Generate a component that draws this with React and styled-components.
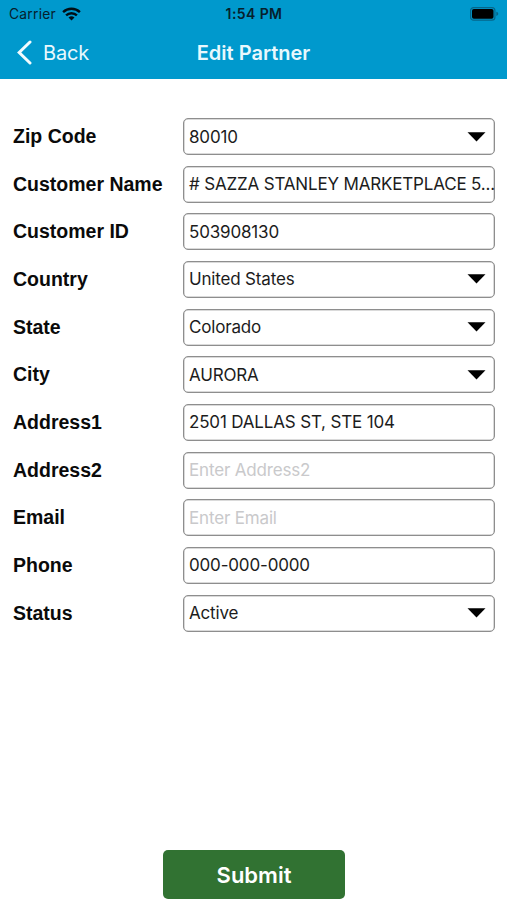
import styled, { createGlobalStyle } from "styled-components";

const GlobalStyle = createGlobalStyle`
  * {
    box-sizing: border-box;
  }

  body {
    margin: 0;
    background: #fff;
    font-family: Inter, "Liberation Sans", sans-serif;
    overflow: hidden;
  }
`;

const fields = [
  { label: "Zip Code", value: "80010", select: true },
  { label: "Customer Name", value: "# SAZZA STANLEY MARKETPLACE 5..." },
  { label: "Customer ID", value: "503908130" },
  { label: "Country", value: "United States", select: true },
  { label: "State", value: "Colorado", select: true },
  { label: "City", value: "AURORA", select: true },
  { label: "Address1", value: "2501 DALLAS ST, STE 104" },
  { label: "Address2", placeholder: "Enter Address2" },
  { label: "Email", placeholder: "Enter Email" },
  { label: "Phone", value: "000-000-0000" },
  { label: "Status", value: "Active", select: true },
];

const Screen = styled.div`
  display: flex;
  flex-direction: column;
  width: 507px;
  height: 900px;
  background: #fff;
`;

const Header = styled.header`
  height: 79px;
  flex-shrink: 0;
  background: #0099cd;
`;

const StatusBar = styled.div`
  display: grid;
  grid-template-columns: 1fr auto 1fr;
  align-items: center;
  height: 27px;
  padding: 0 8px 0 9px;
  color: #06202c;
`;

const Carrier = styled.div`
  display: flex;
  align-items: center;
  gap: 6px;
  font-size: 13.8px;
  letter-spacing: 0.25px;
`;

const Clock = styled.div`
  font-size: 14px;
  font-weight: 600;
  letter-spacing: 0.4px;
`;

const Battery = styled.svg`
  justify-self: end;
`;

const NavBar = styled.div`
  display: grid;
  grid-template-columns: 1fr auto 1fr;
  align-items: center;
  height: 51px;
  padding: 0 16px;
  color: #fff;
`;

const BackButton = styled.button`
  display: flex;
  align-items: center;
  gap: 10px;
  padding: 0;
  border: 0;
  background: none;
  color: #e9f8fd;
  font: 400 20px Inter, sans-serif;
  letter-spacing: -0.2px;
`;

const Title = styled.h1`
  margin: 0;
  font-size: 20px;
  font-weight: 600;
  color: #e9f8fd;
`;

const Form = styled.form`
  display: flex;
  flex-direction: column;
  flex: 1;
  padding: 39px 12px 1px 13px;
`;

const Row = styled.div`
  display: grid;
  grid-template-columns: 170px 1fr;
  align-items: center;
  height: 37px;
  margin-bottom: 10.67px;
`;

const Label = styled.label`
  font: 700 19.5px "Liberation Sans", Arial, sans-serif;
  color: #0a0a0a;
`;

const Field = styled.div`
  display: flex;
  align-items: center;
  justify-content: space-between;
  height: 37px;
  min-width: 0;
  padding: 0 8px 0 5px;
  border: 1px solid #8e8e8e;
  border-radius: 5px;
  box-shadow: inset 0 0 0 0.5px #b5b5b5;
`;

const Value = styled.span`
  font-size: 17px;
  letter-spacing: -0.17px;
  white-space: nowrap;
  color: ${({ $muted }) => ($muted ? "#c9c9cb" : "#1c1c1c")};
`;

const Submit = styled.button`
  align-self: center;
  width: 182px;
  height: 49px;
  margin-top: auto;
  border: 0;
  border-radius: 5px;
  background: #317232;
  color: #fff;
  font: 600 22px Inter, sans-serif;
`;

const WifiIcon = () => (
  <svg width="19" height="14" viewBox="0 0 19 14">
    <g fill="none" stroke="#000f16" strokeWidth="2.4">
      <path d="M1.1 5.2a12 12 0 0 1 16.8 0" />
      <path d="M4.1 8.4a7.7 7.7 0 0 1 10.8 0" />
    </g>
    <path d="M6.5 10.6a4.3 4.3 0 0 1 6 0l-3 3z" fill="#000f16" />
  </svg>
);

const BatteryIcon = () => (
  <Battery width="29" height="14" viewBox="0 0 29 14">
    <rect x=".6" y=".6" width="24.3" height="12.6" rx="3" fill="none" stroke="#05668a" strokeWidth="1.2" />
    <rect x="2" y="2" width="21.5" height="9.8" rx="1.8" fill="#000" />
    <path d="M26.3 4.8c2.6.7 2.6 3.5 0 4.2z" fill="#05668a" />
  </Battery>
);

const BackIcon = () => (
  <svg width="17" height="25" viewBox="0 0 17 25">
    <path d="M14 2 3.2 12.5 14 23" fill="none" stroke="#f2fbfe" strokeWidth="3" strokeLinecap="round" />
  </svg>
);

const Caret = () => (
  <svg width="19" height="10" viewBox="0 0 19 10">
    <path d="M.5.3h18L9.5 9.5z" fill="#000" />
  </svg>
);

const FormRow = ({ label, value, placeholder, select }) => (
  <Row>
    <Label>{label}</Label>
    <Field>
      <Value $muted={!value}>{value || placeholder}</Value>
      {select && <Caret />}
    </Field>
  </Row>
);

export default function App() {
  return (
    <Screen>
      <GlobalStyle />
      <Header>
        <StatusBar>
          <Carrier>
            Carrier
            <WifiIcon />
          </Carrier>
          <Clock>1:54 PM</Clock>
          <BatteryIcon />
        </StatusBar>
        <NavBar>
          <BackButton type="button">
            <BackIcon />
            Back
          </BackButton>
          <Title>Edit Partner</Title>
        </NavBar>
      </Header>
      <Form>
        {fields.map((field) => (
          <FormRow key={field.label} {...field} />
        ))}
        <Submit type="button">Submit</Submit>
      </Form>
    </Screen>
  );
}
